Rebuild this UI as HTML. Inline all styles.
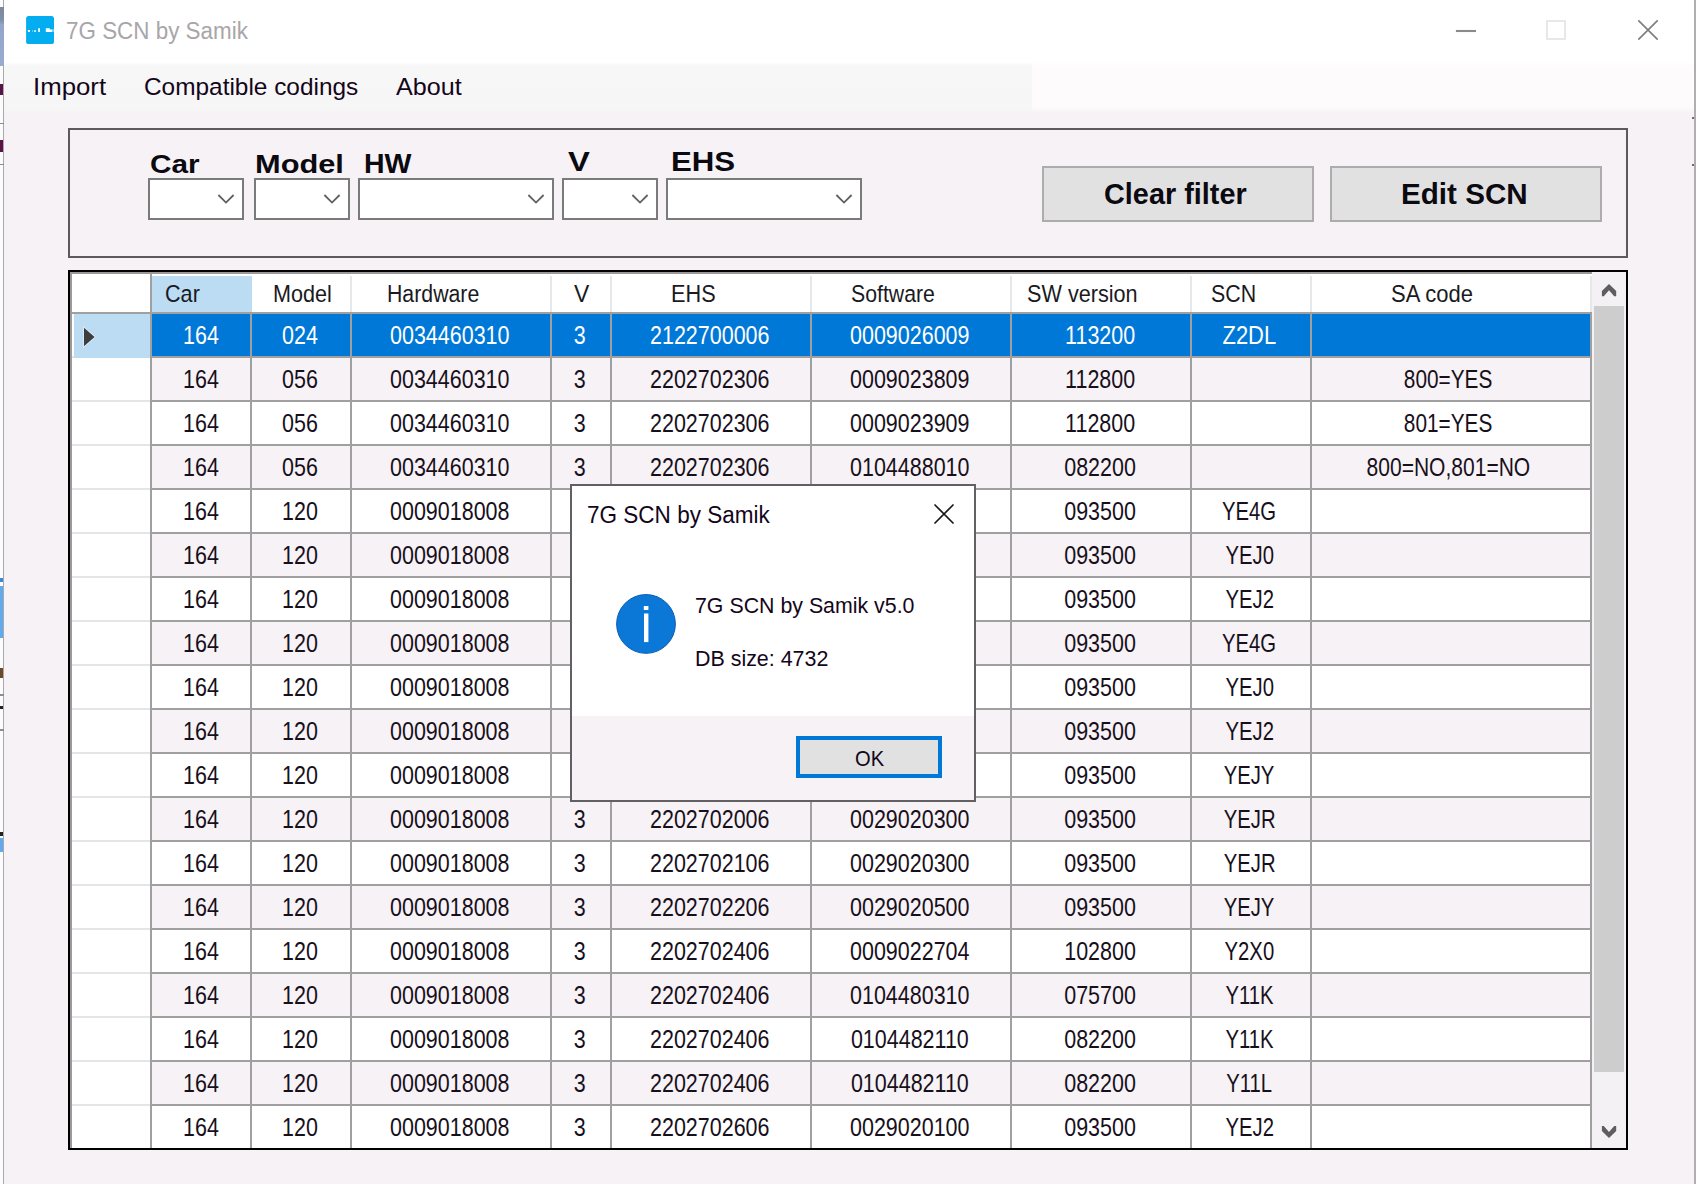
<!DOCTYPE html>
<html lang="en"><head><meta charset="utf-8"><title>7G SCN by Samik</title>
<style>
html,body{margin:0;padding:0;}
body{width:1696px;height:1184px;overflow:hidden;background:#f7f2f5;position:relative;font-family:"Liberation Sans",sans-serif;}
#w{position:absolute;left:0;top:0;width:1696px;height:1184px;overflow:hidden;}
#w div,#w svg,#w .t{position:absolute;display:block;}
#w .t{white-space:nowrap;}
</style></head><body><div id="w">
<div style="left:0px;top:0px;width:1696px;height:63px;background:#ffffff;"></div>
<div style="left:0px;top:62px;width:1032px;height:52px;background:linear-gradient(to bottom,#ffffff 0px,#f8f7f8 4px,#f7f6f7 46px,#f7f2f5 52px);"></div>
<div style="left:1032px;top:62px;width:664px;height:52px;background:linear-gradient(to bottom,#ffffff 0px,#fdfbfc 5px,#fdfbfc 45px,#f7f2f5 51px);"></div>
<div style="left:0px;top:0px;width:2.6px;height:1184px;background:#fdfcfd;"></div>
<div style="left:2.6px;top:0px;width:1.8px;height:1184px;background:#a9a8aa;"></div>
<div style="left:0px;top:7px;width:4.2px;height:59px;background:linear-gradient(to bottom,#7d8898 0%,#8090a8 22%,#93a5cb 30%,#9aabd0 100%);"></div>
<div style="left:0px;top:84px;width:2.6px;height:11px;background:#5a1443;"></div>
<div style="left:0px;top:140px;width:2.6px;height:12px;background:#5a1443;"></div>
<div style="left:0px;top:122.5px;width:4.2px;height:1.6px;background:#8e8c8f;"></div>
<div style="left:0px;top:163.5px;width:4.2px;height:1.6px;background:#8e8c8f;"></div>
<div style="left:0px;top:578px;width:2.6px;height:4px;background:#3f86e0;"></div>
<div style="left:0px;top:586px;width:2.6px;height:52px;background:#62aaf0;"></div>
<div style="left:0px;top:668px;width:2.6px;height:10px;background:#6b4a2a;"></div>
<div style="left:0px;top:694px;width:4.2px;height:1.6px;background:#8e8c8f;"></div>
<div style="left:0px;top:706px;width:2.6px;height:3px;background:#222;"></div>
<div style="left:0px;top:729px;width:4.2px;height:1.6px;background:#8e8c8f;"></div>
<div style="left:0px;top:832px;width:2.6px;height:4px;background:#222;"></div>
<div style="left:0px;top:838px;width:2.6px;height:14px;background:#62aaf0;"></div>
<div style="left:1693.8px;top:0px;width:2.2px;height:1184px;background:#b0aeb1;"></div>
<div style="left:1692px;top:117px;width:2px;height:1.6px;background:#6e6c6f;"></div>
<div style="left:1692px;top:164px;width:2px;height:1.6px;background:#6e6c6f;"></div>
<svg style="left:26px;top:15.9px" width="29" height="29" viewBox="0 0 29 29"><rect x="0.1" y="0" width="27.9" height="28.1" rx="2.6" fill="#04adef"/><rect x="1.9" y="14" width="2.1" height="1.9" fill="#fff"/><rect x="6.2" y="14.3" width="0.9" height="1.5" fill="#fff" opacity=".55"/><rect x="8.2" y="14.1" width="1.7" height="1.8" fill="#fff" opacity=".95"/><rect x="12.2" y="12.2" width="1.8" height="3.7" fill="#fff"/><path d="M19.8 12.3H23.8V13.5H26.1V15.9H19.8Z" fill="#fff"/><rect x="26.1" y="13.2" width="1.9" height="2.7" fill="#fff" opacity=".45"/></svg>
<span class="t" style="left:66.00px;top:19.17px;font-size:24px;line-height:24px;transform:scale(0.9340,1.0337);transform-origin:0 20px;color:#a9a5a9;">7G SCN by Samik</span>
<svg style="left:1440px;top:10px" width="240" height="44" viewBox="0 0 240 44"><path d="M15.9 21H36" stroke="#8a8a8a" stroke-width="2.1" fill="none"/><rect x="107" y="11" width="18" height="18" stroke="#e9e8e9" stroke-width="2" fill="none"/><path d="M198.3 10.4L217.7 29.6M217.7 10.4L198.3 29.6" stroke="#7d7d7d" stroke-width="1.6" fill="none"/></svg>
<span class="t" style="left:32.98px;top:75.40px;font-size:24px;line-height:24px;transform:scale(1.0742,1.0296);transform-origin:0 20px;color:#14061a;">Import</span>
<span class="t" style="left:144.19px;top:75.40px;font-size:24px;line-height:24px;transform:scale(1.0163,1.0296);transform-origin:0 20px;color:#14061a;">Compatible codings</span>
<span class="t" style="left:396.40px;top:75.40px;font-size:24px;line-height:24px;transform:scale(1.0468,1.0296);transform-origin:0 20px;color:#14061a;">About</span>
<div style="left:68px;top:128px;width:1560px;height:129.5px;border:2px solid #5c5a5d;box-sizing:border-box;background:#f7f2f5;"></div>
<span class="t" style="left:150.31px;top:153.20px;font-size:24px;line-height:24px;transform:scale(1.2375,1.0901);transform-origin:0 20px;font-weight:bold;color:#0a0a10;">Car</span>
<span class="t" style="left:255.45px;top:153.20px;font-size:24px;line-height:24px;transform:scale(1.2819,1.0901);transform-origin:0 20px;font-weight:bold;color:#0a0a10;">Model</span>
<span class="t" style="left:364.30px;top:152.80px;font-size:24px;line-height:24px;transform:scale(1.1885,1.1204);transform-origin:0 20px;font-weight:bold;color:#0a0a10;">HW</span>
<span class="t" style="left:568.20px;top:151.20px;font-size:24px;line-height:24px;transform:scale(1.3657,1.1507);transform-origin:0 20px;font-weight:bold;color:#0a0a10;">V</span>
<span class="t" style="left:671.07px;top:151.20px;font-size:24px;line-height:24px;transform:scale(1.3003,1.1507);transform-origin:0 20px;font-weight:bold;color:#0a0a10;">EHS</span>
<div style="left:148px;top:178px;width:95.5px;height:41.6px;border:2px solid #7a7a7a;box-sizing:border-box;background:#fff;"></div>
<svg style="left:216.0px;top:189px" width="20" height="20" viewBox="0 0 20 20"><path d="M2.4 6L10 13.6L17.6 6" stroke="#606060" stroke-width="1.8" fill="none"/></svg>
<div style="left:254px;top:178px;width:95.5px;height:41.6px;border:2px solid #7a7a7a;box-sizing:border-box;background:#fff;"></div>
<svg style="left:322.0px;top:189px" width="20" height="20" viewBox="0 0 20 20"><path d="M2.4 6L10 13.6L17.6 6" stroke="#606060" stroke-width="1.8" fill="none"/></svg>
<div style="left:358px;top:178px;width:195.5px;height:41.6px;border:2px solid #7a7a7a;box-sizing:border-box;background:#fff;"></div>
<svg style="left:526.0px;top:189px" width="20" height="20" viewBox="0 0 20 20"><path d="M2.4 6L10 13.6L17.6 6" stroke="#606060" stroke-width="1.8" fill="none"/></svg>
<div style="left:562px;top:178px;width:95.5px;height:41.6px;border:2px solid #7a7a7a;box-sizing:border-box;background:#fff;"></div>
<svg style="left:630.0px;top:189px" width="20" height="20" viewBox="0 0 20 20"><path d="M2.4 6L10 13.6L17.6 6" stroke="#606060" stroke-width="1.8" fill="none"/></svg>
<div style="left:666px;top:178px;width:195.5px;height:41.6px;border:2px solid #7a7a7a;box-sizing:border-box;background:#fff;"></div>
<svg style="left:834.0px;top:189px" width="20" height="20" viewBox="0 0 20 20"><path d="M2.4 6L10 13.6L17.6 6" stroke="#606060" stroke-width="1.8" fill="none"/></svg>
<div style="left:1042px;top:166px;width:271.6px;height:55.5px;border:2px solid #adadad;box-sizing:border-box;background:#e2e1e2;"></div>
<span class="t" style="left:1104.43px;top:183.70px;font-size:24px;line-height:24px;transform:scale(1.2016,1.1961);transform-origin:0 20px;font-weight:bold;color:#0a0a10;">Clear filter</span>
<div style="left:1330px;top:166px;width:271.6px;height:55.5px;border:2px solid #adadad;box-sizing:border-box;background:#e2e1e2;"></div>
<span class="t" style="left:1401.22px;top:183.80px;font-size:24px;line-height:24px;transform:scale(1.2338,1.2022);transform-origin:0 20px;font-weight:bold;color:#0a0a10;">Edit SCN</span>
<div style="left:68px;top:270px;width:1560px;height:880px;background:#000;"></div>
<div style="left:70px;top:272px;width:1556px;height:876px;background:#fff;"></div>
<div style="left:70px;top:272px;width:2px;height:876px;background:#9a9a9a;"></div>
<div style="left:70px;top:272px;width:1522px;height:1.9px;background:#9a9a9a;"></div>
<div style="left:72px;top:314px;width:78px;height:42px;background:#fff;"></div>
<div style="left:152px;top:314px;width:1438px;height:42px;background:#0078d7;"></div>
<div style="left:72px;top:356px;width:78px;height:2px;background:#e6e4e6;"></div>
<div style="left:74px;top:314px;width:76px;height:44px;background:#bcdcf4;"></div>
<div style="left:150px;top:356px;width:1442px;height:2px;background:#a0a0a0;"></div>
<div style="left:152px;top:358px;width:1438px;height:42px;background:#f7f2f5;"></div>
<div style="left:72px;top:400px;width:78px;height:2px;background:#e6e4e6;"></div>
<div style="left:150px;top:400px;width:1442px;height:2px;background:#a0a0a0;"></div>
<div style="left:72px;top:444px;width:78px;height:2px;background:#e6e4e6;"></div>
<div style="left:150px;top:444px;width:1442px;height:2px;background:#a0a0a0;"></div>
<div style="left:152px;top:446px;width:1438px;height:42px;background:#f7f2f5;"></div>
<div style="left:72px;top:488px;width:78px;height:2px;background:#e6e4e6;"></div>
<div style="left:150px;top:488px;width:1442px;height:2px;background:#a0a0a0;"></div>
<div style="left:72px;top:532px;width:78px;height:2px;background:#e6e4e6;"></div>
<div style="left:150px;top:532px;width:1442px;height:2px;background:#a0a0a0;"></div>
<div style="left:152px;top:534px;width:1438px;height:42px;background:#f7f2f5;"></div>
<div style="left:72px;top:576px;width:78px;height:2px;background:#e6e4e6;"></div>
<div style="left:150px;top:576px;width:1442px;height:2px;background:#a0a0a0;"></div>
<div style="left:72px;top:620px;width:78px;height:2px;background:#e6e4e6;"></div>
<div style="left:150px;top:620px;width:1442px;height:2px;background:#a0a0a0;"></div>
<div style="left:152px;top:622px;width:1438px;height:42px;background:#f7f2f5;"></div>
<div style="left:72px;top:664px;width:78px;height:2px;background:#e6e4e6;"></div>
<div style="left:150px;top:664px;width:1442px;height:2px;background:#a0a0a0;"></div>
<div style="left:72px;top:708px;width:78px;height:2px;background:#e6e4e6;"></div>
<div style="left:150px;top:708px;width:1442px;height:2px;background:#a0a0a0;"></div>
<div style="left:152px;top:710px;width:1438px;height:42px;background:#f7f2f5;"></div>
<div style="left:72px;top:752px;width:78px;height:2px;background:#e6e4e6;"></div>
<div style="left:150px;top:752px;width:1442px;height:2px;background:#a0a0a0;"></div>
<div style="left:72px;top:796px;width:78px;height:2px;background:#e6e4e6;"></div>
<div style="left:150px;top:796px;width:1442px;height:2px;background:#a0a0a0;"></div>
<div style="left:152px;top:798px;width:1438px;height:42px;background:#f7f2f5;"></div>
<div style="left:72px;top:840px;width:78px;height:2px;background:#e6e4e6;"></div>
<div style="left:150px;top:840px;width:1442px;height:2px;background:#a0a0a0;"></div>
<div style="left:72px;top:884px;width:78px;height:2px;background:#e6e4e6;"></div>
<div style="left:150px;top:884px;width:1442px;height:2px;background:#a0a0a0;"></div>
<div style="left:152px;top:886px;width:1438px;height:42px;background:#f7f2f5;"></div>
<div style="left:72px;top:928px;width:78px;height:2px;background:#e6e4e6;"></div>
<div style="left:150px;top:928px;width:1442px;height:2px;background:#a0a0a0;"></div>
<div style="left:72px;top:972px;width:78px;height:2px;background:#e6e4e6;"></div>
<div style="left:150px;top:972px;width:1442px;height:2px;background:#a0a0a0;"></div>
<div style="left:152px;top:974px;width:1438px;height:42px;background:#f7f2f5;"></div>
<div style="left:72px;top:1016px;width:78px;height:2px;background:#e6e4e6;"></div>
<div style="left:150px;top:1016px;width:1442px;height:2px;background:#a0a0a0;"></div>
<div style="left:72px;top:1060px;width:78px;height:2px;background:#e6e4e6;"></div>
<div style="left:150px;top:1060px;width:1442px;height:2px;background:#a0a0a0;"></div>
<div style="left:152px;top:1062px;width:1438px;height:42px;background:#f7f2f5;"></div>
<div style="left:72px;top:1104px;width:78px;height:2px;background:#e6e4e6;"></div>
<div style="left:150px;top:1104px;width:1442px;height:2px;background:#a0a0a0;"></div>
<div style="left:72px;top:1148px;width:78px;height:2px;background:#e6e4e6;"></div>
<div style="left:150px;top:1148px;width:1442px;height:2px;background:#a0a0a0;"></div>
<div style="left:150px;top:312px;width:1442px;height:2px;background:#a0a0a0;"></div>
<div style="left:72px;top:312px;width:78px;height:2px;background:#a0a0a0;"></div>
<div style="left:150px;top:314px;width:2px;height:834px;background:#a0a0a0;"></div>
<div style="left:250px;top:314px;width:2px;height:834px;background:#a0a0a0;"></div>
<div style="left:350px;top:314px;width:2px;height:834px;background:#a0a0a0;"></div>
<div style="left:550px;top:314px;width:2px;height:834px;background:#a0a0a0;"></div>
<div style="left:610px;top:314px;width:2px;height:834px;background:#a0a0a0;"></div>
<div style="left:810px;top:314px;width:2px;height:834px;background:#a0a0a0;"></div>
<div style="left:1010px;top:314px;width:2px;height:834px;background:#a0a0a0;"></div>
<div style="left:1190px;top:314px;width:2px;height:834px;background:#a0a0a0;"></div>
<div style="left:1310px;top:314px;width:2px;height:834px;background:#a0a0a0;"></div>
<div style="left:1590px;top:314px;width:2px;height:834px;background:#a0a0a0;"></div>
<div style="left:250px;top:276px;width:2px;height:36px;background:#e8e6e8;"></div>
<div style="left:350px;top:276px;width:2px;height:36px;background:#e8e6e8;"></div>
<div style="left:550px;top:276px;width:2px;height:36px;background:#e8e6e8;"></div>
<div style="left:610px;top:276px;width:2px;height:36px;background:#e8e6e8;"></div>
<div style="left:810px;top:276px;width:2px;height:36px;background:#e8e6e8;"></div>
<div style="left:1010px;top:276px;width:2px;height:36px;background:#e8e6e8;"></div>
<div style="left:1190px;top:276px;width:2px;height:36px;background:#e8e6e8;"></div>
<div style="left:1310px;top:276px;width:2px;height:36px;background:#e8e6e8;"></div>
<div style="left:1590px;top:276px;width:2px;height:36px;background:#e8e6e8;"></div>
<div style="left:150px;top:274px;width:2px;height:40px;background:#a0a0a0;"></div>
<div style="left:151.5px;top:276px;width:100.5px;height:36px;background:#bcdcf4;"></div>
<div style="left:68px;top:1148px;width:1560px;height:2px;background:#000;"></div>
<span class="t" style="left:165.47px;top:281.70px;font-size:24px;line-height:24px;transform:scale(0.9005,1.0296);transform-origin:0 20px;color:#1a1a22;">Car</span>
<span class="t" style="left:273.09px;top:281.70px;font-size:24px;line-height:24px;transform:scale(0.8999,1.0297);transform-origin:0 20px;color:#1a1a22;">Model</span>
<span class="t" style="left:387.09px;top:281.70px;font-size:24px;line-height:24px;transform:scale(0.8870,1.0298);transform-origin:0 20px;color:#1a1a22;">Hardware</span>
<span class="t" style="left:574.28px;top:281.70px;font-size:24px;line-height:24px;transform:scale(0.9539,1.0296);transform-origin:0 20px;color:#1a1a22;">V</span>
<span class="t" style="left:671.34px;top:281.70px;font-size:24px;line-height:24px;transform:scale(0.9044,1.0235);transform-origin:0 20px;color:#1a1a22;">EHS</span>
<span class="t" style="left:851.28px;top:281.70px;font-size:24px;line-height:24px;transform:scale(0.8859,1.0296);transform-origin:0 20px;color:#1a1a22;">Software</span>
<span class="t" style="left:1027.43px;top:281.70px;font-size:24px;line-height:24px;transform:scale(0.9018,1.0235);transform-origin:0 20px;color:#1a1a22;">SW version</span>
<span class="t" style="left:1211.34px;top:281.70px;font-size:24px;line-height:24px;transform:scale(0.8897,1.0235);transform-origin:0 20px;color:#1a1a22;">SCN</span>
<span class="t" style="left:1391.15px;top:281.70px;font-size:24px;line-height:24px;transform:scale(0.9168,1.0235);transform-origin:0 20px;color:#1a1a22;">SA code</span>
<svg style="left:80px;top:322px" width="20" height="30" viewBox="80 322 20 30"><path d="M84 327.8L94.6 337L84 346.2Z" fill="#3e3e3e" stroke="#fff" stroke-opacity=".55" stroke-width="1.6" paint-order="stroke"/></svg>
<span class="t" style="left:180.76px;top:324.00px;font-size:24px;line-height:24px;transform:scale(0.8950,1.0841);transform-origin:50% 20px;color:#ffffff;">164</span>
<span class="t" style="left:280.46px;top:324.00px;font-size:24px;line-height:24px;transform:scale(0.8950,1.0841);transform-origin:50% 20px;color:#ffffff;">024</span>
<span class="t" style="left:383.48px;top:324.00px;font-size:24px;line-height:24px;transform:scale(0.8950,1.0841);transform-origin:50% 20px;color:#ffffff;">0034460310</span>
<span class="t" style="left:573.34px;top:324.00px;font-size:24px;line-height:24px;transform:scale(0.8950,1.0841);transform-origin:50% 20px;color:#ffffff;">3</span>
<span class="t" style="left:643.08px;top:324.00px;font-size:24px;line-height:24px;transform:scale(0.8950,1.0841);transform-origin:50% 20px;color:#ffffff;">2122700006</span>
<span class="t" style="left:843.28px;top:324.00px;font-size:24px;line-height:24px;transform:scale(0.8950,1.0841);transform-origin:50% 20px;color:#ffffff;">0009026009</span>
<span class="t" style="left:1061.22px;top:324.00px;font-size:24px;line-height:24px;transform:scale(0.8950,1.0841);transform-origin:50% 20px;color:#ffffff;">113200</span>
<span class="t" style="left:1219.96px;top:324.00px;font-size:24px;line-height:24px;transform:scale(0.9150,1.0841);transform-origin:50% 20px;color:#ffffff;">Z2DL</span>
<span class="t" style="left:180.76px;top:368.00px;font-size:24px;line-height:24px;transform:scale(0.8950,1.0841);transform-origin:50% 20px;color:#17101c;">164</span>
<span class="t" style="left:280.46px;top:368.00px;font-size:24px;line-height:24px;transform:scale(0.8950,1.0841);transform-origin:50% 20px;color:#17101c;">056</span>
<span class="t" style="left:383.48px;top:368.00px;font-size:24px;line-height:24px;transform:scale(0.8950,1.0841);transform-origin:50% 20px;color:#17101c;">0034460310</span>
<span class="t" style="left:573.34px;top:368.00px;font-size:24px;line-height:24px;transform:scale(0.8950,1.0841);transform-origin:50% 20px;color:#17101c;">3</span>
<span class="t" style="left:643.08px;top:368.00px;font-size:24px;line-height:24px;transform:scale(0.8950,1.0841);transform-origin:50% 20px;color:#17101c;">2202702306</span>
<span class="t" style="left:843.28px;top:368.00px;font-size:24px;line-height:24px;transform:scale(0.8950,1.0841);transform-origin:50% 20px;color:#17101c;">0009023809</span>
<span class="t" style="left:1061.22px;top:368.00px;font-size:24px;line-height:24px;transform:scale(0.8950,1.0841);transform-origin:50% 20px;color:#17101c;">112800</span>
<span class="t" style="left:1397.34px;top:368.00px;font-size:24px;line-height:24px;transform:scale(0.8660,1.0841);transform-origin:50% 20px;color:#17101c;">800=YES</span>
<span class="t" style="left:180.76px;top:412.00px;font-size:24px;line-height:24px;transform:scale(0.8950,1.0841);transform-origin:50% 20px;color:#17101c;">164</span>
<span class="t" style="left:280.46px;top:412.00px;font-size:24px;line-height:24px;transform:scale(0.8950,1.0841);transform-origin:50% 20px;color:#17101c;">056</span>
<span class="t" style="left:383.48px;top:412.00px;font-size:24px;line-height:24px;transform:scale(0.8950,1.0841);transform-origin:50% 20px;color:#17101c;">0034460310</span>
<span class="t" style="left:573.34px;top:412.00px;font-size:24px;line-height:24px;transform:scale(0.8950,1.0841);transform-origin:50% 20px;color:#17101c;">3</span>
<span class="t" style="left:643.08px;top:412.00px;font-size:24px;line-height:24px;transform:scale(0.8950,1.0841);transform-origin:50% 20px;color:#17101c;">2202702306</span>
<span class="t" style="left:843.28px;top:412.00px;font-size:24px;line-height:24px;transform:scale(0.8950,1.0841);transform-origin:50% 20px;color:#17101c;">0009023909</span>
<span class="t" style="left:1061.22px;top:412.00px;font-size:24px;line-height:24px;transform:scale(0.8950,1.0841);transform-origin:50% 20px;color:#17101c;">112800</span>
<span class="t" style="left:1397.34px;top:412.00px;font-size:24px;line-height:24px;transform:scale(0.8660,1.0841);transform-origin:50% 20px;color:#17101c;">801=YES</span>
<span class="t" style="left:180.76px;top:456.00px;font-size:24px;line-height:24px;transform:scale(0.8950,1.0841);transform-origin:50% 20px;color:#17101c;">164</span>
<span class="t" style="left:280.46px;top:456.00px;font-size:24px;line-height:24px;transform:scale(0.8950,1.0841);transform-origin:50% 20px;color:#17101c;">056</span>
<span class="t" style="left:383.48px;top:456.00px;font-size:24px;line-height:24px;transform:scale(0.8950,1.0841);transform-origin:50% 20px;color:#17101c;">0034460310</span>
<span class="t" style="left:573.34px;top:456.00px;font-size:24px;line-height:24px;transform:scale(0.8950,1.0841);transform-origin:50% 20px;color:#17101c;">3</span>
<span class="t" style="left:643.08px;top:456.00px;font-size:24px;line-height:24px;transform:scale(0.8950,1.0841);transform-origin:50% 20px;color:#17101c;">2202702306</span>
<span class="t" style="left:843.28px;top:456.00px;font-size:24px;line-height:24px;transform:scale(0.8950,1.0841);transform-origin:50% 20px;color:#17101c;">0104488010</span>
<span class="t" style="left:1060.38px;top:456.00px;font-size:24px;line-height:24px;transform:scale(0.8950,1.0841);transform-origin:50% 20px;color:#17101c;">082200</span>
<span class="t" style="left:1354.98px;top:456.00px;font-size:24px;line-height:24px;transform:scale(0.8760,1.0841);transform-origin:50% 20px;color:#17101c;">800=NO,801=NO</span>
<span class="t" style="left:180.76px;top:500.00px;font-size:24px;line-height:24px;transform:scale(0.8950,1.0841);transform-origin:50% 20px;color:#17101c;">164</span>
<span class="t" style="left:280.46px;top:500.00px;font-size:24px;line-height:24px;transform:scale(0.8950,1.0841);transform-origin:50% 20px;color:#17101c;">120</span>
<span class="t" style="left:383.48px;top:500.00px;font-size:24px;line-height:24px;transform:scale(0.8950,1.0841);transform-origin:50% 20px;color:#17101c;">0009018008</span>
<span class="t" style="left:573.34px;top:500.00px;font-size:24px;line-height:24px;transform:scale(0.8950,1.0841);transform-origin:50% 20px;color:#17101c;">3</span>
<span class="t" style="left:643.08px;top:500.00px;font-size:24px;line-height:24px;transform:scale(0.8950,1.0841);transform-origin:50% 20px;color:#17101c;">2202701706</span>
<span class="t" style="left:843.28px;top:500.00px;font-size:24px;line-height:24px;transform:scale(0.8950,1.0841);transform-origin:50% 20px;color:#17101c;">0029020000</span>
<span class="t" style="left:1060.38px;top:500.00px;font-size:24px;line-height:24px;transform:scale(0.8950,1.0841);transform-origin:50% 20px;color:#17101c;">093500</span>
<span class="t" style="left:1217.26px;top:500.00px;font-size:24px;line-height:24px;transform:scale(0.8450,1.0841);transform-origin:50% 20px;color:#17101c;">YE4G</span>
<span class="t" style="left:180.76px;top:544.00px;font-size:24px;line-height:24px;transform:scale(0.8950,1.0841);transform-origin:50% 20px;color:#17101c;">164</span>
<span class="t" style="left:280.46px;top:544.00px;font-size:24px;line-height:24px;transform:scale(0.8950,1.0841);transform-origin:50% 20px;color:#17101c;">120</span>
<span class="t" style="left:383.48px;top:544.00px;font-size:24px;line-height:24px;transform:scale(0.8950,1.0841);transform-origin:50% 20px;color:#17101c;">0009018008</span>
<span class="t" style="left:573.34px;top:544.00px;font-size:24px;line-height:24px;transform:scale(0.8950,1.0841);transform-origin:50% 20px;color:#17101c;">3</span>
<span class="t" style="left:643.08px;top:544.00px;font-size:24px;line-height:24px;transform:scale(0.8950,1.0841);transform-origin:50% 20px;color:#17101c;">2202701706</span>
<span class="t" style="left:843.28px;top:544.00px;font-size:24px;line-height:24px;transform:scale(0.8950,1.0841);transform-origin:50% 20px;color:#17101c;">0029020100</span>
<span class="t" style="left:1060.38px;top:544.00px;font-size:24px;line-height:24px;transform:scale(0.8950,1.0841);transform-origin:50% 20px;color:#17101c;">093500</span>
<span class="t" style="left:1220.62px;top:544.00px;font-size:24px;line-height:24px;transform:scale(0.8450,1.0841);transform-origin:50% 20px;color:#17101c;">YEJ0</span>
<span class="t" style="left:180.76px;top:588.00px;font-size:24px;line-height:24px;transform:scale(0.8950,1.0841);transform-origin:50% 20px;color:#17101c;">164</span>
<span class="t" style="left:280.46px;top:588.00px;font-size:24px;line-height:24px;transform:scale(0.8950,1.0841);transform-origin:50% 20px;color:#17101c;">120</span>
<span class="t" style="left:383.48px;top:588.00px;font-size:24px;line-height:24px;transform:scale(0.8950,1.0841);transform-origin:50% 20px;color:#17101c;">0009018008</span>
<span class="t" style="left:573.34px;top:588.00px;font-size:24px;line-height:24px;transform:scale(0.8950,1.0841);transform-origin:50% 20px;color:#17101c;">3</span>
<span class="t" style="left:643.08px;top:588.00px;font-size:24px;line-height:24px;transform:scale(0.8950,1.0841);transform-origin:50% 20px;color:#17101c;">2202701706</span>
<span class="t" style="left:843.28px;top:588.00px;font-size:24px;line-height:24px;transform:scale(0.8950,1.0841);transform-origin:50% 20px;color:#17101c;">0029020100</span>
<span class="t" style="left:1060.38px;top:588.00px;font-size:24px;line-height:24px;transform:scale(0.8950,1.0841);transform-origin:50% 20px;color:#17101c;">093500</span>
<span class="t" style="left:1220.62px;top:588.00px;font-size:24px;line-height:24px;transform:scale(0.8450,1.0841);transform-origin:50% 20px;color:#17101c;">YEJ2</span>
<span class="t" style="left:180.76px;top:632.00px;font-size:24px;line-height:24px;transform:scale(0.8950,1.0841);transform-origin:50% 20px;color:#17101c;">164</span>
<span class="t" style="left:280.46px;top:632.00px;font-size:24px;line-height:24px;transform:scale(0.8950,1.0841);transform-origin:50% 20px;color:#17101c;">120</span>
<span class="t" style="left:383.48px;top:632.00px;font-size:24px;line-height:24px;transform:scale(0.8950,1.0841);transform-origin:50% 20px;color:#17101c;">0009018008</span>
<span class="t" style="left:573.34px;top:632.00px;font-size:24px;line-height:24px;transform:scale(0.8950,1.0841);transform-origin:50% 20px;color:#17101c;">3</span>
<span class="t" style="left:643.08px;top:632.00px;font-size:24px;line-height:24px;transform:scale(0.8950,1.0841);transform-origin:50% 20px;color:#17101c;">2202701806</span>
<span class="t" style="left:843.28px;top:632.00px;font-size:24px;line-height:24px;transform:scale(0.8950,1.0841);transform-origin:50% 20px;color:#17101c;">0029020000</span>
<span class="t" style="left:1060.38px;top:632.00px;font-size:24px;line-height:24px;transform:scale(0.8950,1.0841);transform-origin:50% 20px;color:#17101c;">093500</span>
<span class="t" style="left:1217.26px;top:632.00px;font-size:24px;line-height:24px;transform:scale(0.8450,1.0841);transform-origin:50% 20px;color:#17101c;">YE4G</span>
<span class="t" style="left:180.76px;top:676.00px;font-size:24px;line-height:24px;transform:scale(0.8950,1.0841);transform-origin:50% 20px;color:#17101c;">164</span>
<span class="t" style="left:280.46px;top:676.00px;font-size:24px;line-height:24px;transform:scale(0.8950,1.0841);transform-origin:50% 20px;color:#17101c;">120</span>
<span class="t" style="left:383.48px;top:676.00px;font-size:24px;line-height:24px;transform:scale(0.8950,1.0841);transform-origin:50% 20px;color:#17101c;">0009018008</span>
<span class="t" style="left:573.34px;top:676.00px;font-size:24px;line-height:24px;transform:scale(0.8950,1.0841);transform-origin:50% 20px;color:#17101c;">3</span>
<span class="t" style="left:643.08px;top:676.00px;font-size:24px;line-height:24px;transform:scale(0.8950,1.0841);transform-origin:50% 20px;color:#17101c;">2202701806</span>
<span class="t" style="left:843.28px;top:676.00px;font-size:24px;line-height:24px;transform:scale(0.8950,1.0841);transform-origin:50% 20px;color:#17101c;">0029020100</span>
<span class="t" style="left:1060.38px;top:676.00px;font-size:24px;line-height:24px;transform:scale(0.8950,1.0841);transform-origin:50% 20px;color:#17101c;">093500</span>
<span class="t" style="left:1220.62px;top:676.00px;font-size:24px;line-height:24px;transform:scale(0.8450,1.0841);transform-origin:50% 20px;color:#17101c;">YEJ0</span>
<span class="t" style="left:180.76px;top:720.00px;font-size:24px;line-height:24px;transform:scale(0.8950,1.0841);transform-origin:50% 20px;color:#17101c;">164</span>
<span class="t" style="left:280.46px;top:720.00px;font-size:24px;line-height:24px;transform:scale(0.8950,1.0841);transform-origin:50% 20px;color:#17101c;">120</span>
<span class="t" style="left:383.48px;top:720.00px;font-size:24px;line-height:24px;transform:scale(0.8950,1.0841);transform-origin:50% 20px;color:#17101c;">0009018008</span>
<span class="t" style="left:573.34px;top:720.00px;font-size:24px;line-height:24px;transform:scale(0.8950,1.0841);transform-origin:50% 20px;color:#17101c;">3</span>
<span class="t" style="left:643.08px;top:720.00px;font-size:24px;line-height:24px;transform:scale(0.8950,1.0841);transform-origin:50% 20px;color:#17101c;">2202701806</span>
<span class="t" style="left:843.28px;top:720.00px;font-size:24px;line-height:24px;transform:scale(0.8950,1.0841);transform-origin:50% 20px;color:#17101c;">0029020100</span>
<span class="t" style="left:1060.38px;top:720.00px;font-size:24px;line-height:24px;transform:scale(0.8950,1.0841);transform-origin:50% 20px;color:#17101c;">093500</span>
<span class="t" style="left:1220.62px;top:720.00px;font-size:24px;line-height:24px;transform:scale(0.8450,1.0841);transform-origin:50% 20px;color:#17101c;">YEJ2</span>
<span class="t" style="left:180.76px;top:764.00px;font-size:24px;line-height:24px;transform:scale(0.8950,1.0841);transform-origin:50% 20px;color:#17101c;">164</span>
<span class="t" style="left:280.46px;top:764.00px;font-size:24px;line-height:24px;transform:scale(0.8950,1.0841);transform-origin:50% 20px;color:#17101c;">120</span>
<span class="t" style="left:383.48px;top:764.00px;font-size:24px;line-height:24px;transform:scale(0.8950,1.0841);transform-origin:50% 20px;color:#17101c;">0009018008</span>
<span class="t" style="left:573.34px;top:764.00px;font-size:24px;line-height:24px;transform:scale(0.8950,1.0841);transform-origin:50% 20px;color:#17101c;">3</span>
<span class="t" style="left:643.08px;top:764.00px;font-size:24px;line-height:24px;transform:scale(0.8950,1.0841);transform-origin:50% 20px;color:#17101c;">2202701906</span>
<span class="t" style="left:843.28px;top:764.00px;font-size:24px;line-height:24px;transform:scale(0.8950,1.0841);transform-origin:50% 20px;color:#17101c;">0029020500</span>
<span class="t" style="left:1060.38px;top:764.00px;font-size:24px;line-height:24px;transform:scale(0.8950,1.0841);transform-origin:50% 20px;color:#17101c;">093500</span>
<span class="t" style="left:1219.30px;top:764.00px;font-size:24px;line-height:24px;transform:scale(0.8450,1.0841);transform-origin:50% 20px;color:#17101c;">YEJY</span>
<span class="t" style="left:180.76px;top:808.00px;font-size:24px;line-height:24px;transform:scale(0.8950,1.0841);transform-origin:50% 20px;color:#17101c;">164</span>
<span class="t" style="left:280.46px;top:808.00px;font-size:24px;line-height:24px;transform:scale(0.8950,1.0841);transform-origin:50% 20px;color:#17101c;">120</span>
<span class="t" style="left:383.48px;top:808.00px;font-size:24px;line-height:24px;transform:scale(0.8950,1.0841);transform-origin:50% 20px;color:#17101c;">0009018008</span>
<span class="t" style="left:573.34px;top:808.00px;font-size:24px;line-height:24px;transform:scale(0.8950,1.0841);transform-origin:50% 20px;color:#17101c;">3</span>
<span class="t" style="left:643.08px;top:808.00px;font-size:24px;line-height:24px;transform:scale(0.8950,1.0841);transform-origin:50% 20px;color:#17101c;">2202702006</span>
<span class="t" style="left:843.28px;top:808.00px;font-size:24px;line-height:24px;transform:scale(0.8950,1.0841);transform-origin:50% 20px;color:#17101c;">0029020300</span>
<span class="t" style="left:1060.38px;top:808.00px;font-size:24px;line-height:24px;transform:scale(0.8950,1.0841);transform-origin:50% 20px;color:#17101c;">093500</span>
<span class="t" style="left:1218.64px;top:808.00px;font-size:24px;line-height:24px;transform:scale(0.8450,1.0841);transform-origin:50% 20px;color:#17101c;">YEJR</span>
<span class="t" style="left:180.76px;top:852.00px;font-size:24px;line-height:24px;transform:scale(0.8950,1.0841);transform-origin:50% 20px;color:#17101c;">164</span>
<span class="t" style="left:280.46px;top:852.00px;font-size:24px;line-height:24px;transform:scale(0.8950,1.0841);transform-origin:50% 20px;color:#17101c;">120</span>
<span class="t" style="left:383.48px;top:852.00px;font-size:24px;line-height:24px;transform:scale(0.8950,1.0841);transform-origin:50% 20px;color:#17101c;">0009018008</span>
<span class="t" style="left:573.34px;top:852.00px;font-size:24px;line-height:24px;transform:scale(0.8950,1.0841);transform-origin:50% 20px;color:#17101c;">3</span>
<span class="t" style="left:643.08px;top:852.00px;font-size:24px;line-height:24px;transform:scale(0.8950,1.0841);transform-origin:50% 20px;color:#17101c;">2202702106</span>
<span class="t" style="left:843.28px;top:852.00px;font-size:24px;line-height:24px;transform:scale(0.8950,1.0841);transform-origin:50% 20px;color:#17101c;">0029020300</span>
<span class="t" style="left:1060.38px;top:852.00px;font-size:24px;line-height:24px;transform:scale(0.8950,1.0841);transform-origin:50% 20px;color:#17101c;">093500</span>
<span class="t" style="left:1218.64px;top:852.00px;font-size:24px;line-height:24px;transform:scale(0.8450,1.0841);transform-origin:50% 20px;color:#17101c;">YEJR</span>
<span class="t" style="left:180.76px;top:896.00px;font-size:24px;line-height:24px;transform:scale(0.8950,1.0841);transform-origin:50% 20px;color:#17101c;">164</span>
<span class="t" style="left:280.46px;top:896.00px;font-size:24px;line-height:24px;transform:scale(0.8950,1.0841);transform-origin:50% 20px;color:#17101c;">120</span>
<span class="t" style="left:383.48px;top:896.00px;font-size:24px;line-height:24px;transform:scale(0.8950,1.0841);transform-origin:50% 20px;color:#17101c;">0009018008</span>
<span class="t" style="left:573.34px;top:896.00px;font-size:24px;line-height:24px;transform:scale(0.8950,1.0841);transform-origin:50% 20px;color:#17101c;">3</span>
<span class="t" style="left:643.08px;top:896.00px;font-size:24px;line-height:24px;transform:scale(0.8950,1.0841);transform-origin:50% 20px;color:#17101c;">2202702206</span>
<span class="t" style="left:843.28px;top:896.00px;font-size:24px;line-height:24px;transform:scale(0.8950,1.0841);transform-origin:50% 20px;color:#17101c;">0029020500</span>
<span class="t" style="left:1060.38px;top:896.00px;font-size:24px;line-height:24px;transform:scale(0.8950,1.0841);transform-origin:50% 20px;color:#17101c;">093500</span>
<span class="t" style="left:1219.30px;top:896.00px;font-size:24px;line-height:24px;transform:scale(0.8450,1.0841);transform-origin:50% 20px;color:#17101c;">YEJY</span>
<span class="t" style="left:180.76px;top:940.00px;font-size:24px;line-height:24px;transform:scale(0.8950,1.0841);transform-origin:50% 20px;color:#17101c;">164</span>
<span class="t" style="left:280.46px;top:940.00px;font-size:24px;line-height:24px;transform:scale(0.8950,1.0841);transform-origin:50% 20px;color:#17101c;">120</span>
<span class="t" style="left:383.48px;top:940.00px;font-size:24px;line-height:24px;transform:scale(0.8950,1.0841);transform-origin:50% 20px;color:#17101c;">0009018008</span>
<span class="t" style="left:573.34px;top:940.00px;font-size:24px;line-height:24px;transform:scale(0.8950,1.0841);transform-origin:50% 20px;color:#17101c;">3</span>
<span class="t" style="left:643.08px;top:940.00px;font-size:24px;line-height:24px;transform:scale(0.8950,1.0841);transform-origin:50% 20px;color:#17101c;">2202702406</span>
<span class="t" style="left:843.28px;top:940.00px;font-size:24px;line-height:24px;transform:scale(0.8950,1.0841);transform-origin:50% 20px;color:#17101c;">0009022704</span>
<span class="t" style="left:1060.38px;top:940.00px;font-size:24px;line-height:24px;transform:scale(0.8950,1.0841);transform-origin:50% 20px;color:#17101c;">102800</span>
<span class="t" style="left:1219.96px;top:940.00px;font-size:24px;line-height:24px;transform:scale(0.8450,1.0841);transform-origin:50% 20px;color:#17101c;">Y2X0</span>
<span class="t" style="left:180.76px;top:984.00px;font-size:24px;line-height:24px;transform:scale(0.8950,1.0841);transform-origin:50% 20px;color:#17101c;">164</span>
<span class="t" style="left:280.46px;top:984.00px;font-size:24px;line-height:24px;transform:scale(0.8950,1.0841);transform-origin:50% 20px;color:#17101c;">120</span>
<span class="t" style="left:383.48px;top:984.00px;font-size:24px;line-height:24px;transform:scale(0.8950,1.0841);transform-origin:50% 20px;color:#17101c;">0009018008</span>
<span class="t" style="left:573.34px;top:984.00px;font-size:24px;line-height:24px;transform:scale(0.8950,1.0841);transform-origin:50% 20px;color:#17101c;">3</span>
<span class="t" style="left:643.08px;top:984.00px;font-size:24px;line-height:24px;transform:scale(0.8950,1.0841);transform-origin:50% 20px;color:#17101c;">2202702406</span>
<span class="t" style="left:843.28px;top:984.00px;font-size:24px;line-height:24px;transform:scale(0.8950,1.0841);transform-origin:50% 20px;color:#17101c;">0104480310</span>
<span class="t" style="left:1060.38px;top:984.00px;font-size:24px;line-height:24px;transform:scale(0.8950,1.0841);transform-origin:50% 20px;color:#17101c;">075700</span>
<span class="t" style="left:1220.86px;top:984.00px;font-size:24px;line-height:24px;transform:scale(0.8450,1.0841);transform-origin:50% 20px;color:#17101c;">Y11K</span>
<span class="t" style="left:180.76px;top:1028.00px;font-size:24px;line-height:24px;transform:scale(0.8950,1.0841);transform-origin:50% 20px;color:#17101c;">164</span>
<span class="t" style="left:280.46px;top:1028.00px;font-size:24px;line-height:24px;transform:scale(0.8950,1.0841);transform-origin:50% 20px;color:#17101c;">120</span>
<span class="t" style="left:383.48px;top:1028.00px;font-size:24px;line-height:24px;transform:scale(0.8950,1.0841);transform-origin:50% 20px;color:#17101c;">0009018008</span>
<span class="t" style="left:573.34px;top:1028.00px;font-size:24px;line-height:24px;transform:scale(0.8950,1.0841);transform-origin:50% 20px;color:#17101c;">3</span>
<span class="t" style="left:643.08px;top:1028.00px;font-size:24px;line-height:24px;transform:scale(0.8950,1.0841);transform-origin:50% 20px;color:#17101c;">2202702406</span>
<span class="t" style="left:844.12px;top:1028.00px;font-size:24px;line-height:24px;transform:scale(0.8950,1.0841);transform-origin:50% 20px;color:#17101c;">0104482110</span>
<span class="t" style="left:1060.38px;top:1028.00px;font-size:24px;line-height:24px;transform:scale(0.8950,1.0841);transform-origin:50% 20px;color:#17101c;">082200</span>
<span class="t" style="left:1220.86px;top:1028.00px;font-size:24px;line-height:24px;transform:scale(0.8450,1.0841);transform-origin:50% 20px;color:#17101c;">Y11K</span>
<span class="t" style="left:180.76px;top:1072.00px;font-size:24px;line-height:24px;transform:scale(0.8950,1.0841);transform-origin:50% 20px;color:#17101c;">164</span>
<span class="t" style="left:280.46px;top:1072.00px;font-size:24px;line-height:24px;transform:scale(0.8950,1.0841);transform-origin:50% 20px;color:#17101c;">120</span>
<span class="t" style="left:383.48px;top:1072.00px;font-size:24px;line-height:24px;transform:scale(0.8950,1.0841);transform-origin:50% 20px;color:#17101c;">0009018008</span>
<span class="t" style="left:573.34px;top:1072.00px;font-size:24px;line-height:24px;transform:scale(0.8950,1.0841);transform-origin:50% 20px;color:#17101c;">3</span>
<span class="t" style="left:643.08px;top:1072.00px;font-size:24px;line-height:24px;transform:scale(0.8950,1.0841);transform-origin:50% 20px;color:#17101c;">2202702406</span>
<span class="t" style="left:844.12px;top:1072.00px;font-size:24px;line-height:24px;transform:scale(0.8950,1.0841);transform-origin:50% 20px;color:#17101c;">0104482110</span>
<span class="t" style="left:1060.38px;top:1072.00px;font-size:24px;line-height:24px;transform:scale(0.8950,1.0841);transform-origin:50% 20px;color:#17101c;">082200</span>
<span class="t" style="left:1222.18px;top:1072.00px;font-size:24px;line-height:24px;transform:scale(0.8450,1.0841);transform-origin:50% 20px;color:#17101c;">Y11L</span>
<span class="t" style="left:180.76px;top:1116.00px;font-size:24px;line-height:24px;transform:scale(0.8950,1.0841);transform-origin:50% 20px;color:#17101c;">164</span>
<span class="t" style="left:280.46px;top:1116.00px;font-size:24px;line-height:24px;transform:scale(0.8950,1.0841);transform-origin:50% 20px;color:#17101c;">120</span>
<span class="t" style="left:383.48px;top:1116.00px;font-size:24px;line-height:24px;transform:scale(0.8950,1.0841);transform-origin:50% 20px;color:#17101c;">0009018008</span>
<span class="t" style="left:573.34px;top:1116.00px;font-size:24px;line-height:24px;transform:scale(0.8950,1.0841);transform-origin:50% 20px;color:#17101c;">3</span>
<span class="t" style="left:643.08px;top:1116.00px;font-size:24px;line-height:24px;transform:scale(0.8950,1.0841);transform-origin:50% 20px;color:#17101c;">2202702606</span>
<span class="t" style="left:843.28px;top:1116.00px;font-size:24px;line-height:24px;transform:scale(0.8950,1.0841);transform-origin:50% 20px;color:#17101c;">0029020100</span>
<span class="t" style="left:1060.38px;top:1116.00px;font-size:24px;line-height:24px;transform:scale(0.8950,1.0841);transform-origin:50% 20px;color:#17101c;">093500</span>
<span class="t" style="left:1220.62px;top:1116.00px;font-size:24px;line-height:24px;transform:scale(0.8450,1.0841);transform-origin:50% 20px;color:#17101c;">YEJ2</span>
<div style="left:1592.2px;top:272px;width:33.8px;height:876px;background:#f4f1f4;"></div>
<div style="left:1594.1px;top:305.8px;width:30px;height:766.2px;background:#cdcdcd;"></div>
<svg style="left:1598px;top:280px" width="22" height="20" viewBox="1598 280 22 20"><path d="M1609 284L1616.2 291.1V296.2H1614.2L1609 290.3L1603.8 296.2H1601.9V291.1Z" fill="#5e5e5e"/></svg>
<svg style="left:1598px;top:1122px" width="22" height="20" viewBox="1598 1122 22 20"><path d="M1609 1138L1616.2 1130.9V1126.1H1614.2L1609 1131.9L1603.8 1126.1H1601.9V1130.9Z" fill="#5e5e5e"/></svg>
<div style="left:570px;top:484px;width:406px;height:317.5px;background:#fff;border:2px solid #626063;box-sizing:border-box;"></div>
<div style="left:572px;top:716px;width:402px;height:83.5px;background:#f7f2f5;"></div>
<span class="t" style="left:587.24px;top:503.28px;font-size:24px;line-height:24px;transform:scale(0.9389,0.9741);transform-origin:0 20px;color:#14061a;">7G SCN by Samik</span>
<svg style="left:930px;top:500px" width="28" height="28" viewBox="0 0 28 28"><path d="M4.5 4.5L23.5 23.5M23.5 4.5L4.5 23.5" stroke="#1a1a1a" stroke-width="1.7" fill="none"/></svg>
<svg style="left:614px;top:592px" width="64" height="64" viewBox="0 0 64 64"><circle cx="32" cy="31.95" r="29.4" fill="#0b78d8" stroke="#0a5fb4" stroke-width="1"/><rect x="30" y="21.5" width="4.4" height="28.6" fill="#fff"/><rect x="29.8" y="14" width="4.6" height="4" fill="#fff"/></svg>
<span class="t" style="left:695.40px;top:593.30px;font-size:24px;line-height:24px;transform:scale(0.8894,0.9387);transform-origin:0 20px;color:#14061a;">7G SCN by Samik v5.0</span>
<span class="t" style="left:694.96px;top:645.70px;font-size:24px;line-height:24px;transform:scale(0.8923,0.9387);transform-origin:0 20px;color:#14061a;">DB size: 4732</span>
<div style="left:796px;top:736px;width:146px;height:42px;background:#e2e1e2;border:4px solid #0078d7;box-sizing:border-box;"></div>
<span class="t" style="left:855.37px;top:745.50px;font-size:24px;line-height:24px;transform:scale(0.8392,0.9575);transform-origin:0 20px;color:#14061a;">OK</span>
</div></body></html>
